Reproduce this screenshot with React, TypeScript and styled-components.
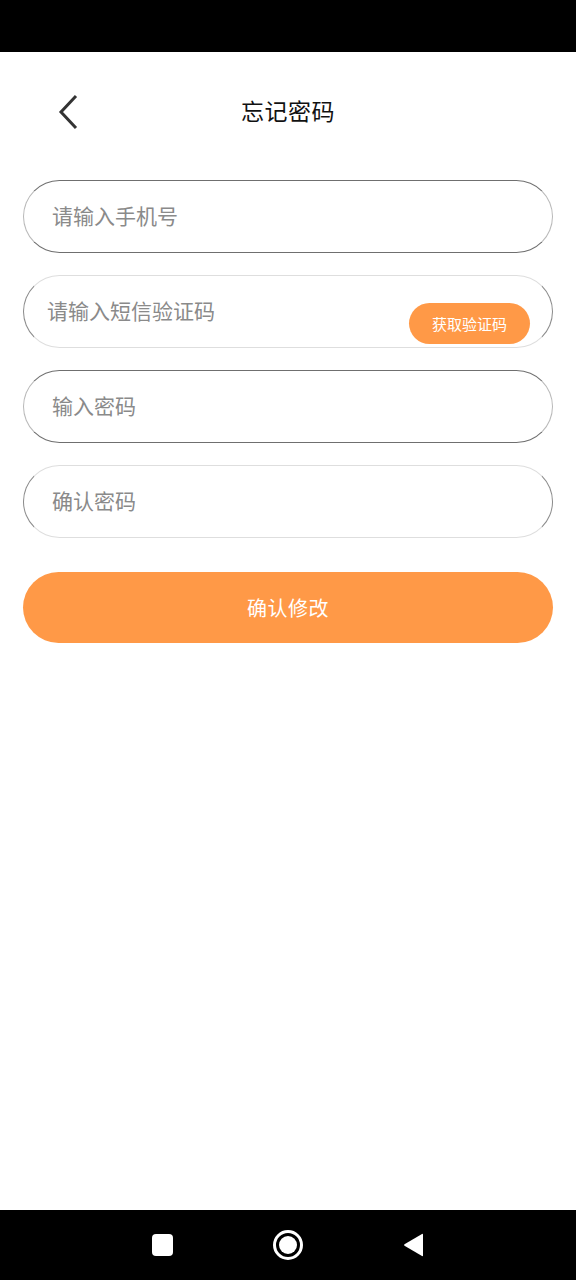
import React from 'react';
import styled, { createGlobalStyle } from 'styled-components';

const GlobalStyle = createGlobalStyle`
  html, body {
    margin: 0;
    padding: 0;
    background: #fff;
  }
  body {
    font-family: "Noto Sans CJK SC", "Noto Sans", sans-serif;
  }
  * {
    box-sizing: border-box;
  }
`;

const ORANGE = '#ff9947';

const Page = styled.div`
  min-height: 100vh;
  display: flex;
  flex-direction: column;
  background: #fff;
`;

const StatusBar = styled.div`
  height: 52px;
  background: #000;
`;

const Header = styled.div`
  height: 120px;
  padding-bottom: 4px;
  display: flex;
  align-items: center;
  justify-content: center;
  position: relative;
`;

const BackButton = styled.button`
  position: absolute;
  left: 54px;
  top: 40px;
  width: 30px;
  height: 40px;
  padding: 0;
  border: none;
  background: transparent;
  display: flex;
  align-items: center;
  justify-content: center;
`;

const Title = styled.h1`
  margin: 0;
  font-size: 23px;
  font-weight: 400;
  color: #111;
  letter-spacing: 0.5px;
`;

const Form = styled.div`
  padding: 8px 23px 0;
  display: flex;
  flex-direction: column;
  gap: 22px;
`;

const Field = styled.div<{ $faint?: boolean; $inset?: number }>`
  height: 73px;
  border-radius: 37px;
  border: 1px solid;
  border-color: ${(p) => (p.$faint ? '#dedede #8a8a8a #dedede #8a8a8a' : '#6f6f6f #b8b8b8 #6f6f6f #b8b8b8')};
  display: flex;
  align-items: center;
  padding: 0 22px 0 ${(p) => p.$inset ?? 28}px;
`;

const Input = styled.input`
  flex: 1;
  min-width: 0;
  margin-bottom: 4px;
  border: none;
  outline: none;
  padding: 0;
  background: transparent;
  font-family: inherit;
  font-size: 21px;
  color: #333;
  &::placeholder {
    color: #8a8a8a;
  }
`;

const CodeButton = styled.button`
  align-self: flex-end;
  margin-bottom: 3px;
  width: 121px;
  height: 41px;
  border-radius: 21px;
  border: none;
  background: ${ORANGE};
  color: #fff;
  font-family: inherit;
  font-size: 15px;
  padding: 0;
`;

const Submit = styled.button`
  margin: 34px 23px 0;
  height: 71px;
  border-radius: 36px;
  border: none;
  background: ${ORANGE};
  color: #fff;
  font-family: inherit;
  font-size: 20px;
  letter-spacing: 0.5px;
`;

const Spacer = styled.div`
  flex: 1;
`;

const NavBar = styled.div`
  height: 70px;
  background: #000;
  display: flex;
  align-items: center;
  justify-content: center;
  gap: 100px;
`;

const NavSquare = styled.div`
  width: 21px;
  height: 22px;
  border-radius: 4px;
  background: #fff;
`;

const ChevronLeft = () => (
  <svg width="24" height="36" viewBox="0 0 24 36">
    <path d="M19 2 L4 18 L19 34" fill="none" stroke="#333" strokeWidth="3" strokeLinecap="butt" strokeLinejoin="miter" />
  </svg>
);

const HomeIcon = () => (
  <svg width="30" height="30" viewBox="0 0 30 30">
    <circle cx="15" cy="15" r="13.5" fill="none" stroke="#fff" strokeWidth="3" />
    <circle cx="15" cy="15" r="9" fill="#fff" />
  </svg>
);

const BackTriangle = () => (
  <svg width="21" height="24" viewBox="0 0 21 24">
    <path d="M20 1.5 L20 22.5 Q20 23.5 19 23 L1.5 12.8 Q0.5 12 1.5 11.2 L19 1 Q20 0.5 20 1.5 Z" fill="#fff" />
  </svg>
);

export default function App() {
  return (
    <Page>
      <GlobalStyle />
      <StatusBar />
      <Header>
        <BackButton aria-label="返回">
          <ChevronLeft />
        </BackButton>
        <Title>忘记密码</Title>
      </Header>
      <Form>
        <Field>
          <Input placeholder="请输入手机号" />
        </Field>
        <Field $faint $inset={23}>
          <Input placeholder="请输入短信验证码" />
          <CodeButton>获取验证码</CodeButton>
        </Field>
        <Field>
          <Input type="password" placeholder="输入密码" />
        </Field>
        <Field $faint>
          <Input type="password" placeholder="确认密码" />
        </Field>
      </Form>
      <Submit>确认修改</Submit>
      <Spacer />
      <NavBar>
        <NavSquare />
        <HomeIcon />
        <BackTriangle />
      </NavBar>
    </Page>
  );
}
